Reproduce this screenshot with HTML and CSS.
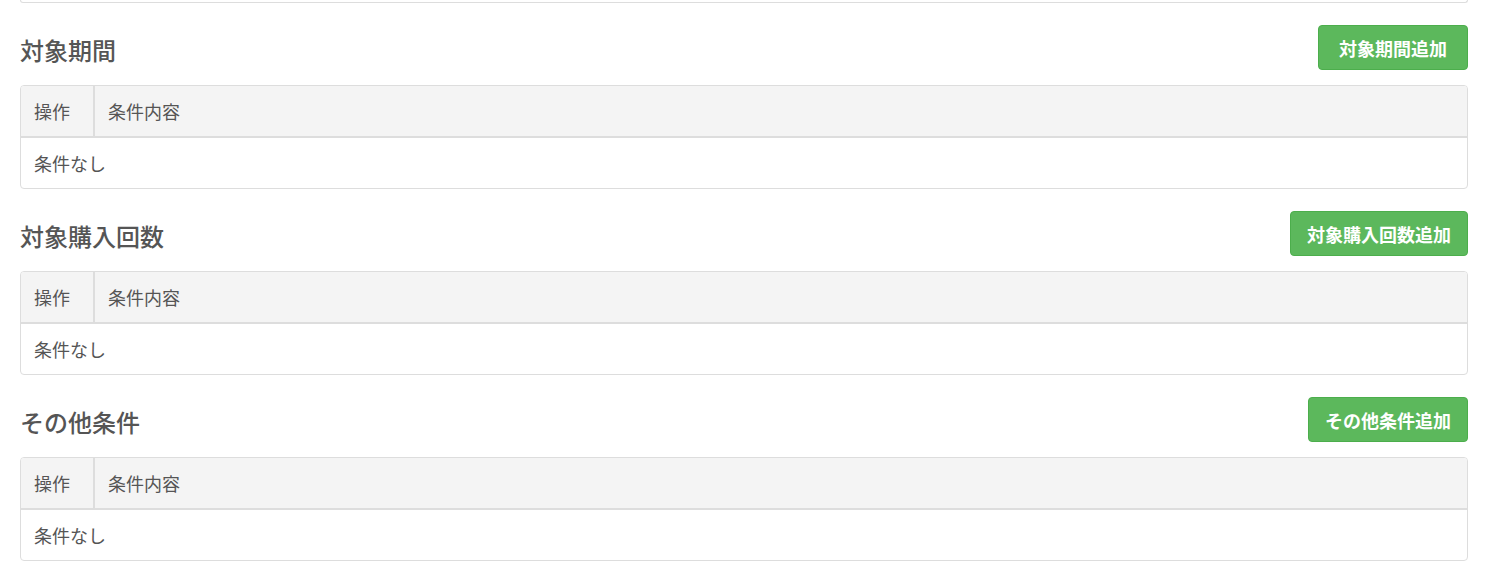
FILE: index.html
```html
<!DOCTYPE html>
<html lang="ja">
<head>
  <meta charset="UTF-8">
  <meta name="viewport" content="width=device-width, initial-scale=1.0">
  <title>条件設定</title>
  <link rel="stylesheet" href="styles.css">
</head>
<body>
  <div class="page">
    <div class="prev-box"></div>

    <div class="section">
      <div class="section-head">
        <h2>対象期間</h2>
        <button class="btn-add">対象期間追加</button>
      </div>
      <div class="cond-table">
        <div class="cond-row cond-header">
          <div class="cell cell-op">操作</div>
          <div class="cell">条件内容</div>
        </div>
        <div class="cond-row">
          <div class="cell">条件なし</div>
        </div>
      </div>
    </div>

    <div class="section">
      <div class="section-head">
        <h2>対象購入回数</h2>
        <button class="btn-add">対象購入回数追加</button>
      </div>
      <div class="cond-table">
        <div class="cond-row cond-header">
          <div class="cell cell-op">操作</div>
          <div class="cell">条件内容</div>
        </div>
        <div class="cond-row">
          <div class="cell">条件なし</div>
        </div>
      </div>
    </div>

    <div class="section">
      <div class="section-head">
        <h2>その他条件</h2>
        <button class="btn-add">その他条件追加</button>
      </div>
      <div class="cond-table">
        <div class="cond-row cond-header">
          <div class="cell cell-op">操作</div>
          <div class="cell">条件内容</div>
        </div>
        <div class="cond-row">
          <div class="cell">条件なし</div>
        </div>
      </div>
    </div>
  </div>
</body>
</html>
```

FILE: styles.css
```css
body { margin: 0; background: #fff; font-family: "Noto Sans CJK JP", "Noto Sans", sans-serif; color: #555; }
.page { padding: 0 18px 0 20px; }
.prev-box { height: 2px; border: 1px solid #ddd; border-top: none; border-radius: 0 0 4px 4px; }
.section { margin-top: 22px; }
.section-head { display: flex; justify-content: space-between; align-items: center; height: 45px; }
.section-head h2 { margin: 0; padding-top: 5px; font-size: 24px; font-weight: 500; color: #555; line-height: 1; }
.btn-add { box-sizing: border-box; height: 45px; min-width: 150px; padding: 0 16px; background: #5cb85c; border: 1px solid #4cae4c; border-radius: 4px; color: #fff; font-family: inherit; font-size: 18px; font-weight: bold; cursor: pointer; }
.btn-add:hover { background: #449d44; }
.cond-table { margin-top: 15px; border: 1px solid #ddd; border-radius: 4px; overflow: hidden; }
.cond-row { display: flex; height: 50px; align-items: stretch; }
.cond-header { background: #f4f4f4; border-bottom: 2px solid #ddd; }
.cell { display: flex; align-items: center; padding: 0 13px; font-size: 18px; color: #555; }
.cell-op { width: 46px; border-right: 2px solid #ddd; }
```
